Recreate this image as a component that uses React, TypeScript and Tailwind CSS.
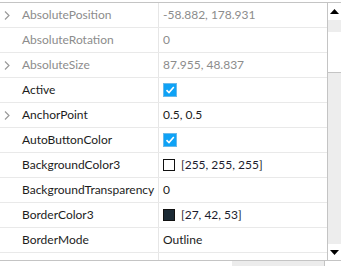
import React from "react";

type Row = {
  name: string;
  value?: string;
  disabled?: boolean;
  chevron?: boolean;
  kind?: "text" | "check" | "color";
  color?: string;
};

const rows: Row[] = [
  { name: "AbsolutePosition", value: "-58.882, 178.931", disabled: true, chevron: true },
  { name: "AbsoluteRotation", value: "0", disabled: true },
  { name: "AbsoluteSize", value: "87.955, 48.837", disabled: true, chevron: true },
  { name: "Active", kind: "check" },
  { name: "AnchorPoint", value: "0.5, 0.5", chevron: true },
  { name: "AutoButtonColor", kind: "check" },
  { name: "BackgroundColor3", kind: "color", color: "#ffffff", value: "[255, 255, 255]" },
  { name: "BackgroundTransparency", value: "0" },
  { name: "BorderColor3", kind: "color", color: "#1b2a35", value: "[27, 42, 53]" },
  { name: "BorderMode", value: "Outline" },
];

function Chevron() {
  return (
    <svg width="6" height="9" viewBox="0 0 6 9" className="block">
      <path d="M1 0.5 L5 4.5 L1 8.5" fill="none" stroke="#9a9a9a" strokeWidth="1.2" />
    </svg>
  );
}

function Check() {
  return (
    <div className="w-[14px] h-[14px] bg-[#0ea2f6] border border-[#6ab9ea] flex items-center justify-center">
      <svg width="12" height="12" viewBox="0 0 12 12">
        <path d="M2.5 6.2 L5 8.6 L9.8 3" fill="none" stroke="#ffffff" strokeWidth="1.6" />
      </svg>
    </div>
  );
}

export default function App() {
  return (
    <div
      className="w-[341px] h-[266px] bg-white overflow-hidden flex flex-col"
      style={{ fontFamily: "Lato, 'Open Sans', sans-serif" }}
    >
      <div className="h-[2px]" />
      <div className="flex h-[259px] border-t border-b border-[#c4c4c4]">
        <div className="w-[327px] flex flex-col">
          {rows.map((r) => (
            <div key={r.name} className="h-[25px] shrink-0 flex border-b border-[#e9e9e9]">
              <div className="w-[159px] shrink-0 flex items-center border-r border-[#e6e6e6] overflow-hidden">
                <div className="w-[22px] shrink-0 pl-[4px] flex items-center">{r.chevron ? <Chevron /> : null}</div>
                <span
                  className={`whitespace-nowrap text-[12px] leading-none ${r.disabled ? "text-[#8c8c8c]" : "text-[#1c1c1c]"}`}
                >
                  {r.name}
                </span>
              </div>
              <div className="flex-1 flex items-center pl-[4px]">
                {r.kind === "check" ? (
                  <Check />
                ) : r.kind === "color" ? (
                  <div className="flex items-center">
                    <div
                      className="w-[12px] h-[12px] border border-[#111111]"
                      style={{ backgroundColor: r.color }}
                    />
                    <span className="ml-[6px] text-[12px] leading-none text-[#1c1c2e]">{r.value}</span>
                  </div>
                ) : (
                  <span
                    className={`text-[12px] leading-none ${r.disabled ? "text-[#8c8c8c]" : "text-[#1c1c1c]"}`}
                  >
                    {r.value}
                  </span>
                )}
              </div>
            </div>
          ))}
          <div className="flex-1 flex">
            <div className="w-[159px] border-r border-[#e6e6e6]" />
          </div>
        </div>
        <div className="w-[14px] border-l border-[#c4c4c4] flex flex-col">
          <div className="h-[17px] flex items-center justify-center bg-white">
            <svg width="9" height="5" viewBox="0 0 9 5">
              <path d="M0 5 L4.5 0 L9 5 Z" fill="#000" />
            </svg>
          </div>
          <div className="h-[12px] bg-[#ededed]" />
          <div className="h-[41px] bg-white border-b border-[#c4c4c4]" />
          <div className="flex-1 bg-[#ededed]" />
          <div className="h-[16px] flex items-center justify-center bg-white">
            <svg width="9" height="5" viewBox="0 0 9 5">
              <path d="M0 0 L9 0 L4.5 5 Z" fill="#000" />
            </svg>
          </div>
        </div>
      </div>
      <div className="flex-1 flex">
        <div className="w-[232px]" />
        <div className="w-[93px] bg-[#ececec] border-r border-[#c4c4c4]" />
      </div>
    </div>
  );
}
